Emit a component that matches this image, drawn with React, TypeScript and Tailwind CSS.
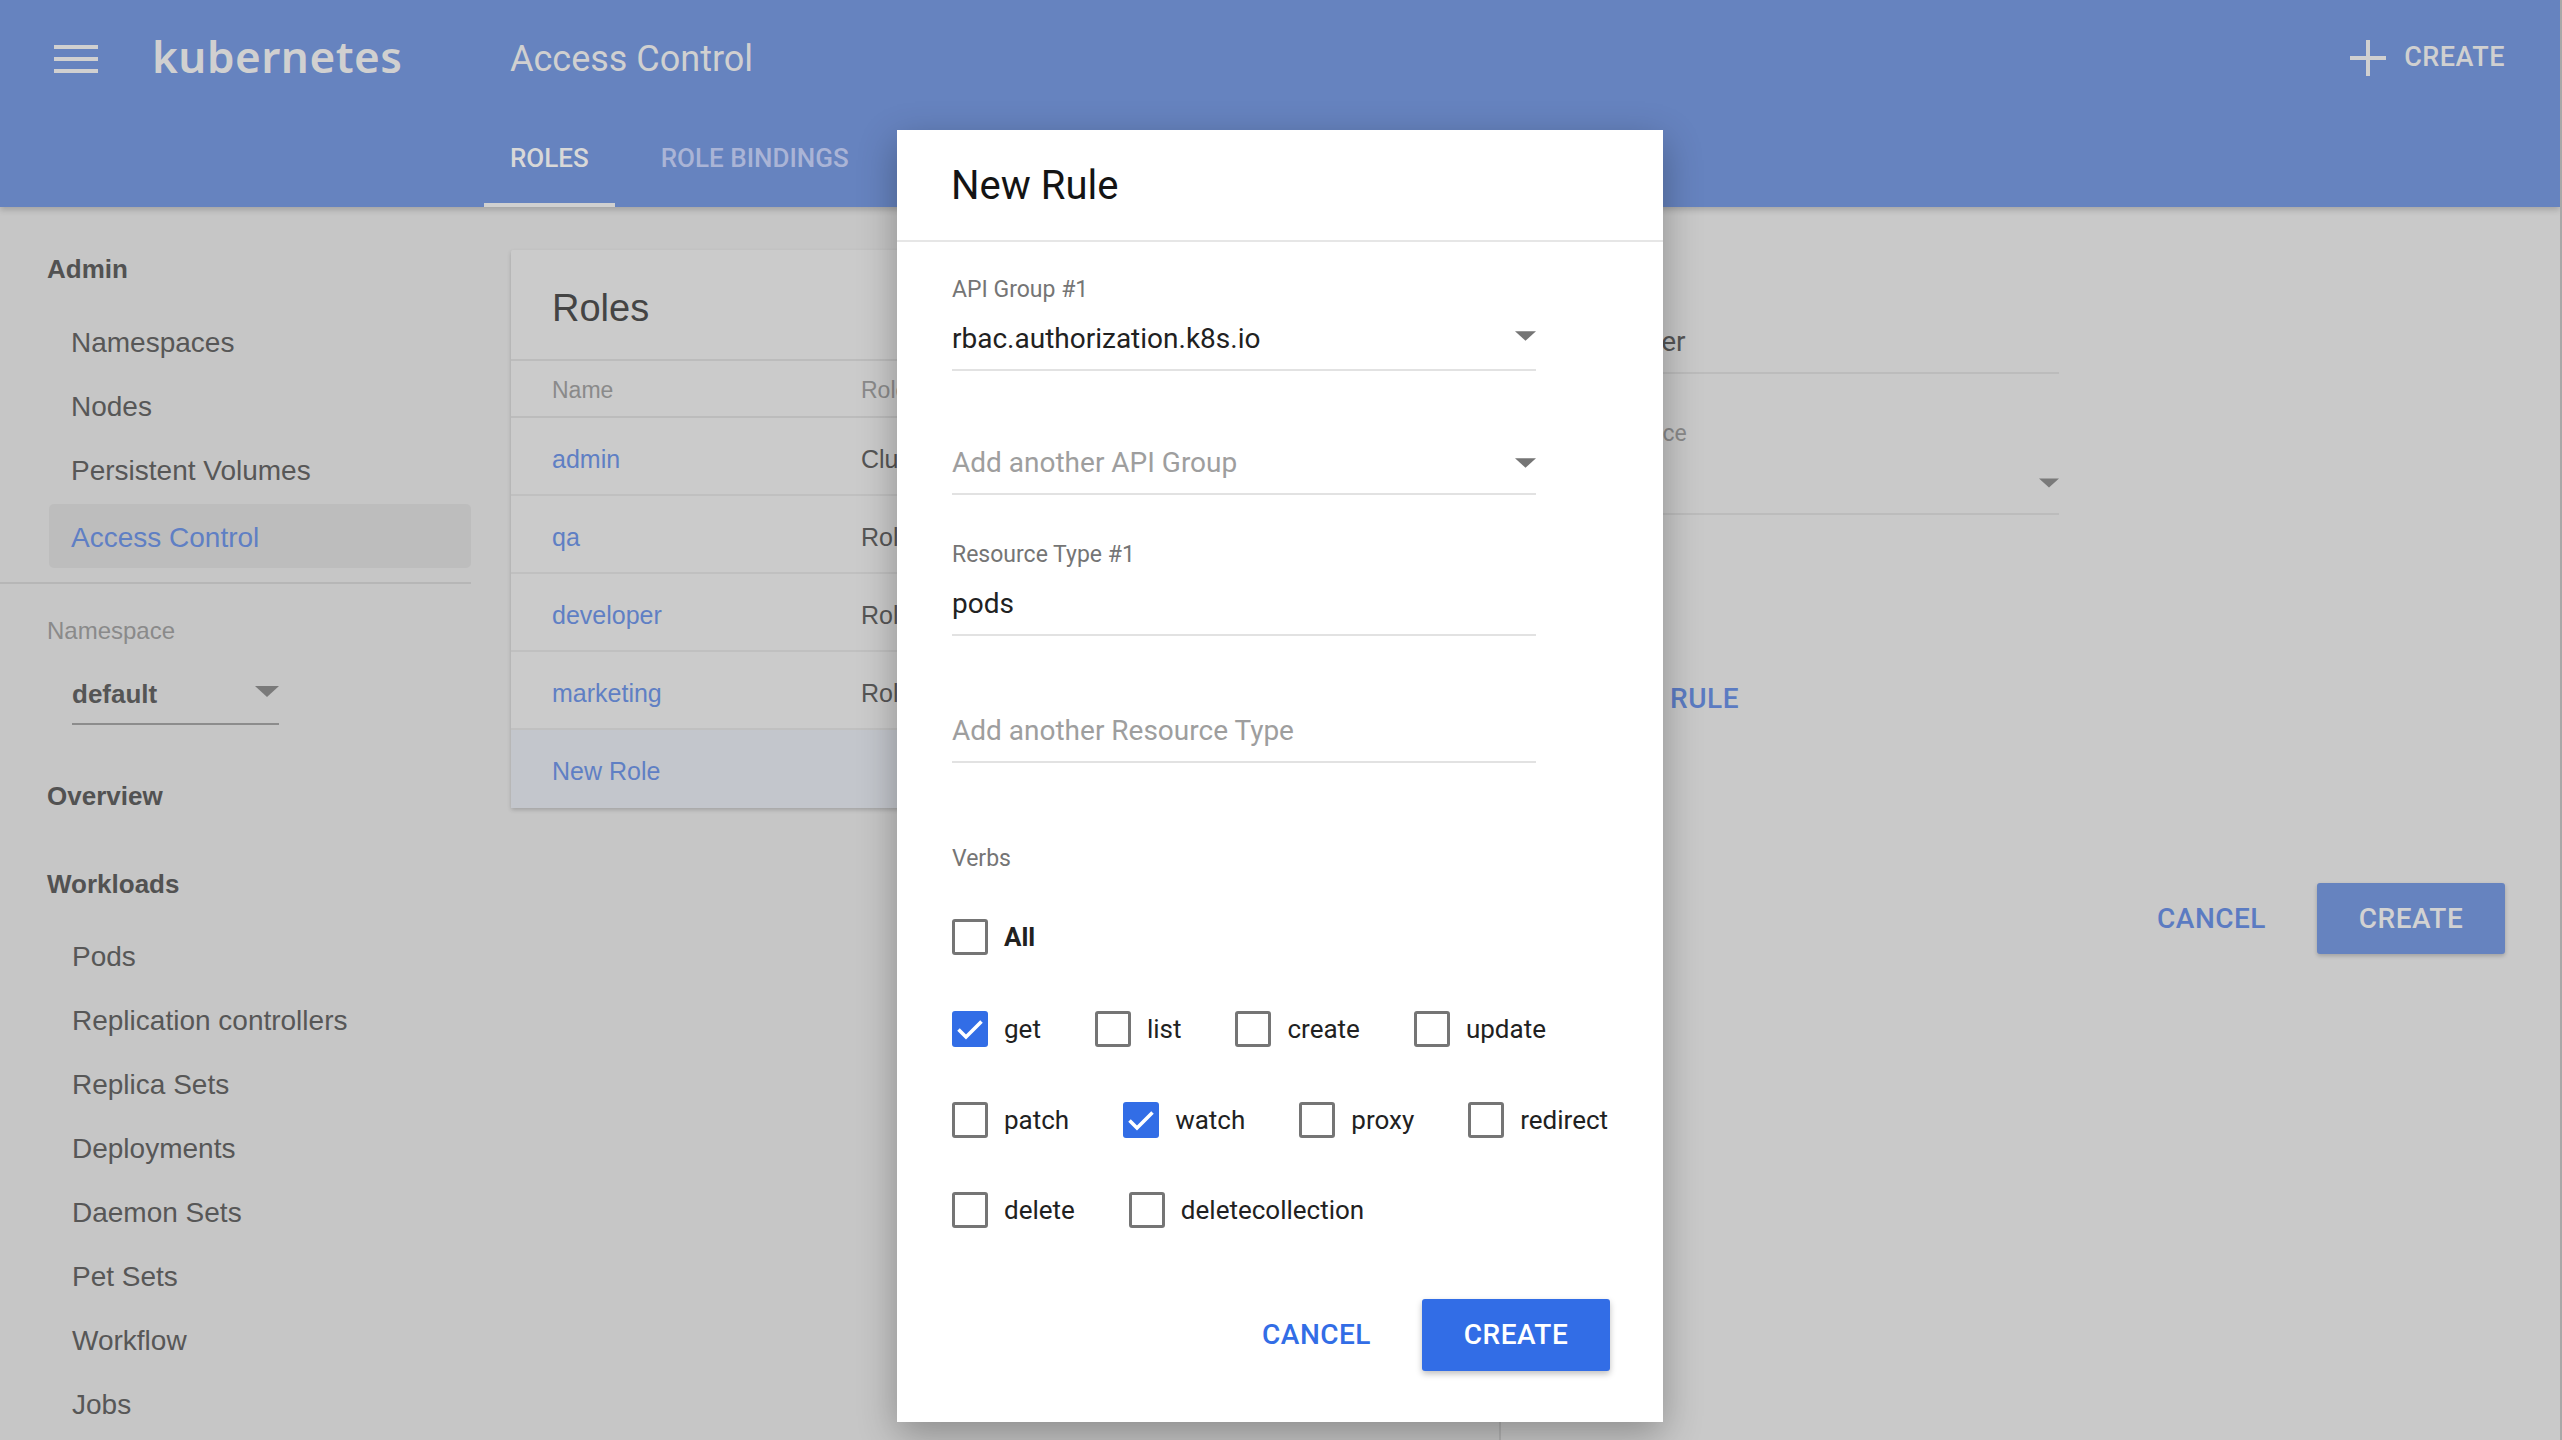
import React from "react";

const sideFont = { fontFamily: '"Liberation Sans", Arial, sans-serif' };
const roboto = { fontFamily: 'Roboto, "Liberation Sans", sans-serif' };

const Arrow = ({ className }: { className: string }) => (
  <svg viewBox="0 0 24 11" className={className}>
    <path d="M0 0 L24 0 L12 11 Z" fill="currentColor" />
  </svg>
);

const Checkbox = ({ checked }: { checked?: boolean }) =>
  checked ? (
    <div className="w-[36px] h-[36px] rounded-[3px] bg-[#326de6] flex items-center justify-center shrink-0">
      <svg viewBox="0 0 36 36" className="w-[36px] h-[36px]">
        <path d="M6.5 18.5 L14 26 L29.5 10.5" fill="none" stroke="white" strokeWidth="3.6" />
      </svg>
    </div>
  ) : (
    <div className="w-[36px] h-[36px] rounded-[3px] border-[3px] border-[#757575] bg-white shrink-0" />
  );

const Verb = ({ label, checked, bold }: { label: string; checked?: boolean; bold?: boolean }) => (
  <div className="h-[36px] flex items-center gap-[16px]">
    <Checkbox checked={checked} />
    <span className={`text-[26px] leading-[36px] text-[#212121] ${bold ? "font-bold" : ""}`}>{label}</span>
  </div>
);

const adminItems = ["Namespaces", "Nodes", "Persistent Volumes"];
const workloads = [
  "Pods",
  "Replication controllers",
  "Replica Sets",
  "Deployments",
  "Daemon Sets",
  "Pet Sets",
  "Workflow",
  "Jobs",
];

const roles = [
  { name: "admin", kind: "ClusterRole" },
  { name: "qa", kind: "Role" },
  { name: "developer", kind: "Role" },
  { name: "marketing", kind: "Role" },
];

const Sidebar = () => (
  <div className="w-[471px] shrink-0 pt-[42px] flex flex-col" style={sideFont}>
    <div className="h-[40px] flex items-center pl-[47px] text-[26px] font-bold text-[#525252]">Admin</div>
    <div className="mt-[22px] flex flex-col">
      {adminItems.map((item) => (
        <div key={item} className="h-[64px] flex items-center pl-[71px] text-[28px] text-[#575757]">
          {item}
        </div>
      ))}
      <div className="mt-[1px] ml-[49px] h-[64px] rounded-[5px] bg-[#bdbdbd] flex items-center pl-[22px] pt-[3px] text-[28px] text-[#5f7fc4]">
        Access Control
      </div>
    </div>
    <div className="mt-[14px] h-[2px] bg-[#b6b6b6]" />
    <div className="mt-[32px] h-[30px] flex items-center pl-[47px] text-[24px] text-[#8a8a8a]">Namespace</div>
    <div className="mt-[31px] ml-[72px] w-[207px] pb-[12px] border-b-2 border-[#8c8c8c] flex items-center">
      <span className="h-[34px] flex items-center text-[26px] font-bold text-[#555]">default</span>
      <Arrow className="ml-auto w-[24px] h-[11px] text-[#7a7a7a] mb-[6px]" />
    </div>
    <div className="mt-[51px] h-[40px] flex items-center pl-[47px] text-[26px] font-bold text-[#525252]">Overview</div>
    <div className="mt-[48px] h-[40px] flex items-center pl-[47px] text-[26px] font-bold text-[#525252]">Workloads</div>
    <div className="mt-[21px] flex flex-col">
      {workloads.map((item) => (
        <div key={item} className="h-[64px] flex items-center pl-[72px] text-[28px] text-[#575757]">
          {item}
        </div>
      ))}
    </div>
  </div>
);

const RolesCard = () => (
  <div className="w-[948px] bg-[#cbcbcb] rounded-[2px] shadow-[0_2px_4px_rgba(0,0,0,0.18)] flex flex-col" style={sideFont}>
    <div className="h-[111px] flex items-center pl-[41px] pt-[6px] text-[38px] leading-none text-[#444] border-b-2 border-[#bcbcbc]">
      Roles
    </div>
    <div className="h-[57px] flex items-center pl-[41px] pt-[4px] text-[23px] text-[#8a8a8a] border-b-2 border-[#bcbcbc]">
      <span className="w-[309px]">Name</span>
      <span>Role Type</span>
    </div>
    {roles.map((r) => (
      <div key={r.name} className="h-[78px] flex items-center pl-[41px] pt-[7px] text-[25px] border-b-2 border-[#c0c0c0]">
        <span className="w-[309px] text-[#5f7fc4]">{r.name}</span>
        <span className="text-[#555]">{r.kind}</span>
      </div>
    ))}
    <div className="h-[78px] flex items-center pl-[41px] pt-[6px] text-[25px] bg-[#c3c6cc] text-[#5f7fc4]">New Role</div>
  </div>
);

const RightPanel = () => (
  <div className="flex-1 border-l-2 border-[#b4b4b4] bg-[#c9c9c9] flex flex-col pl-[63px] pr-[55px] pt-[72px]" style={roboto}>
    <div className="w-[495px] flex flex-col pb-[13px] border-b-2 border-[#bcbcbc]">
      <span className="h-[28px] flex items-center text-[23px] text-[#8a8a8a]">Name</span>
      <span className="mt-[18px] h-[34px] flex items-center text-[28px] text-[#555]">developer</span>
    </div>
    <div className="mt-[46px] w-[495px] flex flex-col pb-[13px] border-b-2 border-[#bcbcbc]">
      <span className="h-[28px] flex items-center text-[23px] text-[#8a8a8a]">Namespace</span>
      <div className="mt-[18px] h-[34px] flex items-center">
        <Arrow className="ml-auto w-[20px] h-[10px] text-[#7a7a7a]" />
      </div>
    </div>
    <div className="mt-[167px] h-[34px] flex items-center pl-[42px] text-[28px] font-medium text-[#5b7bc2] tracking-[0.5px]">
      ADD RULE
    </div>
    <div className="mt-[167px] flex items-center justify-end gap-[51px]">
      <span className="text-[28px] font-medium text-[#5b7bc2] tracking-[0.5px]">CANCEL</span>
      <div className="w-[188px] h-[71px] rounded-[3px] bg-[#6683bf] shadow-[0_2px_4px_rgba(0,0,0,0.2)] flex items-center justify-center text-[28px] font-medium text-[#d2d2d2] tracking-[0.5px]">
        CREATE
      </div>
    </div>
  </div>
);

const Dialog = () => (
  <div
    className="absolute left-[897px] top-[130px] w-[766px] h-[1292px] bg-white z-20 shadow-[0_12px_36px_rgba(0,0,0,0.3)] flex flex-col"
    style={roboto}
  >
    <div className="h-[112px] flex items-center pl-[54px] pt-[2px] text-[40px] text-[#141414] border-b-2 border-[#e6e6e6]">
      New Rule
    </div>
    <div className="pl-[55px] flex flex-col">
      <div className="w-[584px] pt-[34px] pb-[13px] border-b-2 border-[#e2e2e2] flex flex-col">
        <span className="h-[28px] flex items-center text-[23px] text-[#757575]">API Group #1</span>
        <div className="mt-[18px] h-[34px] flex items-center">
          <span className="text-[28px] text-[#212121]">rbac.authorization.k8s.io</span>
          <Arrow className="ml-auto w-[21px] h-[10px] text-[#757575] mb-[6px]" />
        </div>
      </div>
      <div className="mt-[75px] w-[584px] pb-[13px] border-b-2 border-[#e2e2e2] h-[49px] flex items-center">
        <span className="text-[28px] text-[#9e9e9e]">Add another API Group</span>
        <Arrow className="ml-auto w-[21px] h-[10px] text-[#757575]" />
      </div>
      <div className="mt-[46px] w-[584px] pb-[13px] border-b-2 border-[#e2e2e2] flex flex-col">
        <span className="h-[28px] flex items-center text-[23px] text-[#757575]">Resource Type #1</span>
        <span className="mt-[18px] h-[34px] flex items-center text-[28px] text-[#212121]">pods</span>
      </div>
      <div className="mt-[78px] w-[584px] pb-[13px] border-b-2 border-[#e2e2e2] h-[49px] flex items-center">
        <span className="text-[28px] text-[#9e9e9e]">Add another Resource Type</span>
      </div>
      <span className="mt-[82px] h-[28px] flex items-center text-[23px] text-[#757575]">Verbs</span>
      <div className="mt-[46px] flex">
        <Verb label="All" bold />
      </div>
      <div className="mt-[56px] flex gap-[54px]">
        <Verb label="get" checked />
        <Verb label="list" />
        <Verb label="create" />
        <Verb label="update" />
      </div>
      <div className="mt-[55px] flex gap-[54px]">
        <Verb label="patch" />
        <Verb label="watch" checked />
        <Verb label="proxy" />
        <Verb label="redirect" />
      </div>
      <div className="mt-[54px] flex gap-[54px]">
        <Verb label="delete" />
        <Verb label="deletecollection" />
      </div>
    </div>
    <div className="mt-[71px] pr-[53px] flex items-center justify-end gap-[51px]">
      <span className="text-[28px] font-medium text-[#326de6] tracking-[0.5px]">CANCEL</span>
      <div className="w-[188px] h-[72px] rounded-[3px] bg-[#326de6] shadow-[0_3px_6px_rgba(0,0,0,0.25)] flex items-center justify-center text-[28px] font-medium text-white tracking-[0.5px]">
        CREATE
      </div>
    </div>
  </div>
);

export default function App() {
  return (
    <div className="relative w-[2562px] h-[1440px] overflow-hidden bg-[#c6c6c6] flex flex-col border-r-2 border-[#a8a8a8]">
      <div className="relative z-10 h-[207px] shrink-0 bg-[#6683bf] flex flex-col pt-[3px] shadow-[0_3px_6px_rgba(0,0,0,0.18)]" style={roboto}>
        <div className="h-[111px] flex items-center pl-[54px] pr-[55px]">
          <div className="w-[44px] flex flex-col gap-[8px]">
            <div className="h-[4px] bg-[#d0d0d0]" />
            <div className="h-[4px] bg-[#d0d0d0]" />
            <div className="h-[4px] bg-[#d0d0d0]" />
          </div>
          <span
            className="ml-[54px] w-[358px] pb-[5px] text-[44px] font-semibold text-[#d0d0d0] tracking-[0.5px]"
            style={{ fontFamily: '"Noto Sans", "Open Sans", sans-serif' }}
          >
            kubernetes
          </span>
          <span className="text-[36px] text-[#d0d0d0]">Access Control</span>
          <div className="ml-auto flex items-center gap-[18px] pb-[2px]">
            <svg viewBox="0 0 36 36" className="w-[36px] h-[36px]">
              <rect x="16" y="0" width="4" height="36" fill="#d0d0d0" />
              <rect x="0" y="16" width="36" height="4" fill="#d0d0d0" />
            </svg>
            <span className="text-[27px] font-medium text-[#d0d0d0] tracking-[0.5px]">CREATE</span>
          </div>
        </div>
        <div className="h-[93px] flex pl-[484px] gap-[20px]">
          <div className="px-[26px] flex items-center text-[26px] font-medium text-[#d8d8d8] border-b-4 border-[#d0d0d0]">
            ROLES
          </div>
          <div className="px-[26px] flex items-center text-[26px] font-medium text-[#aab4d6] border-b-4 border-transparent">
            ROLE BINDINGS
          </div>
        </div>
      </div>
      <div className="flex-1 flex">
        <Sidebar />
        <div className="w-[1028px] shrink-0 pl-[40px] pt-[43px]">
          <RolesCard />
        </div>
        <RightPanel />
      </div>
      <Dialog />
    </div>
  );
}
